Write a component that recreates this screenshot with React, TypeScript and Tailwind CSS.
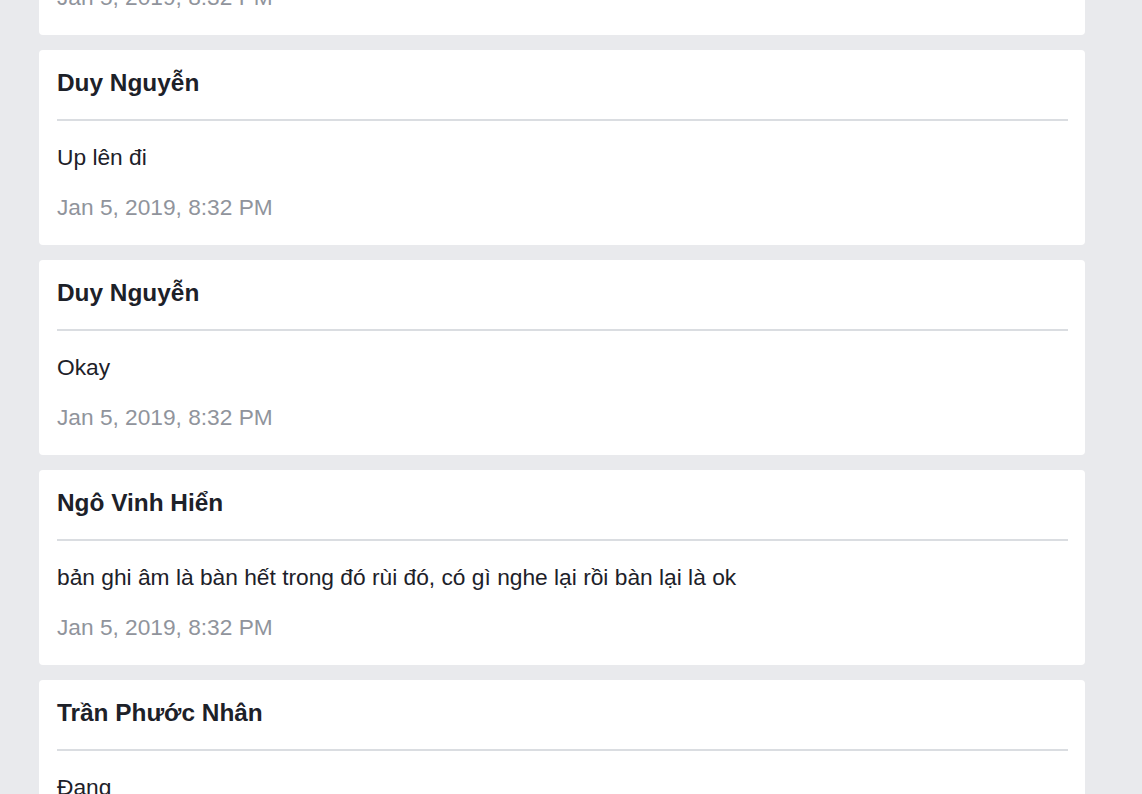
import React from "react";

type Comment = { name: string; text: string; date: string };

const comments: Comment[] = [
  { name: "Duy Nguyễn", text: "Ok", date: "Jan 5, 2019, 8:32 PM" },
  { name: "Duy Nguyễn", text: "Up lên đi", date: "Jan 5, 2019, 8:32 PM" },
  { name: "Duy Nguyễn", text: "Okay", date: "Jan 5, 2019, 8:32 PM" },
  {
    name: "Ngô Vinh Hiển",
    text: "bản ghi âm là bàn hết trong đó rùi đó, có gì nghe lại rồi bàn lại là ok",
    date: "Jan 5, 2019, 8:32 PM",
  },
  { name: "Trần Phước Nhân", text: "Đang", date: "Jan 5, 2019, 8:32 PM" },
];

function Card({ c }: { c: Comment }) {
  return (
    <div className="bg-white rounded-[4px] pt-[19px] pb-[25px] pl-[18px] pr-[17px]">
      <div className="text-[24.4px] leading-[28px] font-bold text-[#1d2129]">{c.name}</div>
      <div className="mt-[22px] h-[2px] bg-[#dadde1]" />
      <div className="mt-[23px] text-[22.75px] leading-[26px] text-[#1d2129]">{c.text}</div>
      <div className="mt-[24px] text-[22.7px] leading-[26px] text-[#90949c]">{c.date}</div>
    </div>
  );
}

export default function App() {
  return (
    <div
      className="min-h-screen h-[794px] overflow-hidden bg-[#e9eaed]"
      style={{ fontFamily: '"Liberation Sans", Arial, Helvetica, sans-serif' }}
    >
      <div className="ml-[39px] w-[1046px] mt-[-160px] flex flex-col gap-[15px]">
        {comments.map((c, i) => (
          <Card key={i} c={c} />
        ))}
      </div>
    </div>
  );
}
